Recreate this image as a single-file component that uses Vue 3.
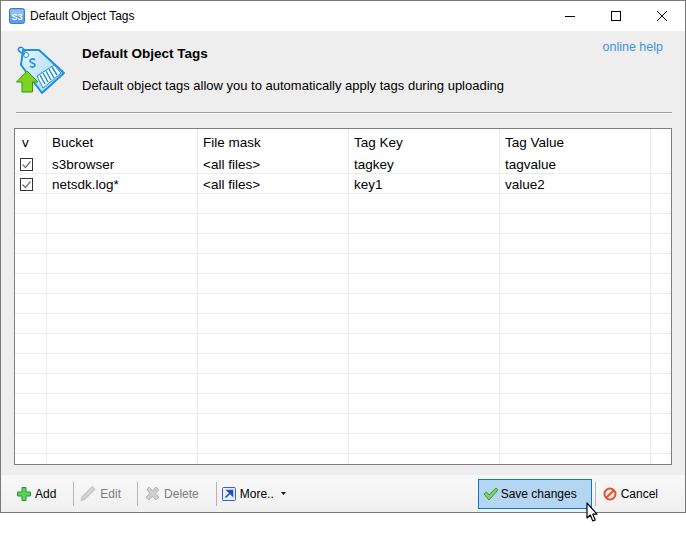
<template>
  <div class="page">
    <div class="window">
      <div class="titlebar">
        <svg class="app-icon" width="16" height="16" viewBox="0 0 16 16">
          <rect x="0.5" y="0.5" width="15" height="15" rx="2" fill="#5b9fe6" stroke="#3c7cc8" />
          <rect x="1.5" y="1.5" width="13" height="6" rx="1" fill="#8fc2f2" />
          <text x="8" y="12" text-anchor="middle" class="app-icon-text">S3</text>
        </svg>
        <span class="title-text">Default Object Tags</span>
        <div class="win-buttons">
          <svg width="46" height="30" viewBox="0 0 46 30"><path d="M18 15.500h10" stroke="#000" fill="none" /></svg>
          <svg width="46" height="30" viewBox="0 0 46 30"><rect x="18.500" y="10.500" width="9" height="9" stroke="#000" fill="none" /></svg>
          <svg width="46" height="30" viewBox="0 0 46 30"><path d="M18 10l10 10M28 10l-10 10" stroke="#000" fill="none" /></svg>
        </div>
      </div>

      <div class="body">
        <div class="header">
          <svg class="tag-icon" width="50" height="50" viewBox="0 0 50 50">
            <defs>
              <linearGradient id="tagFill" x1="0" y1="0" x2="1" y2="1">
                <stop offset="0" stop-color="#e4f4fe" />
                <stop offset="1" stop-color="#9fd6f8" />
              </linearGradient>
            </defs>
            <path d="M7 5 L23 5 L48 28 L26 48 L5 20 Z" fill="url(#tagFill)" stroke="#1c8fe0" stroke-width="2" stroke-linejoin="round" />
            <circle cx="10" cy="10" r="2.500" fill="#fff" stroke="#1c8fe0" />
            <path d="M9 9C4 8 1 5 3 3 5 1 8 3 9 7" fill="none" stroke="#1c8fe0" stroke-width="1.500" />
            <path d="M19 15c-2-2-5-1-5 1s5 2 5 4-3 3-5 1" fill="none" stroke="#1c8fe0" stroke-width="1.600" />
            <path d="M21 31 L38 20 L45 28 L27 43 Z" fill="#fff" stroke="#1c8fe0" />
            <path d="M24 30l5 9M27 28l5 9M30 26l5 9M33 24l5 9M36 22l5 8" stroke="#1c8fe0" stroke-width="1.500" fill="none" />
            <path d="M11 26 L22 37 L16.500 37 L16.500 47 L6 47 L6 37 L0.500 37 Z" fill="#7ed321" stroke="#2f9a12" stroke-linejoin="round" />
          </svg>
          <div class="header-text">
            <div class="header-title">Default Object Tags</div>
            <div class="header-desc">Default object tags allow you to automatically apply tags during uploading</div>
          </div>
          <a class="help-link">online help</a>
        </div>
        <div class="separator"></div>

        <div class="grid">
          <div class="grid-head">
            <div v-for="col in columns" :key="col" class="head-cell">{{ col }}</div>
            <div class="head-cell filler"></div>
          </div>
          <div v-for="(row, i) in rows" :key="i" class="grid-row">
            <div class="cell check-cell">
              <svg v-if="row.bucket" width="13" height="13" viewBox="0 0 13 13">
                <rect x="0.500" y="0.500" width="12" height="12" fill="#fff" stroke="#333" />
                <path d="M2.500 6.500l3 3 5-6" fill="none" stroke="#777" stroke-width="1.300" />
              </svg>
            </div>
            <div class="cell">{{ row.bucket }}</div>
            <div class="cell">{{ row.mask }}</div>
            <div class="cell">{{ row.key }}</div>
            <div class="cell">{{ row.value }}</div>
            <div class="cell filler"></div>
          </div>
        </div>
      </div>

      <div class="toolbar">
        <div class="tool">
          <svg width="14" height="14" viewBox="0 0 14 14"><path d="M5 .5h4v4.500h4.500v4H9v4.500H5V9H.5V5H5z" fill="#5fcf5f" stroke="#1f9a3a" /></svg>
          <span>Add</span>
        </div>
        <i class="tool-sep"></i>
        <div class="tool disabled edit">
          <svg width="16" height="17" viewBox="0 0 17 17"><path d="M13 1l3 3L5.500 14.500l-4.500 1.500 1.500-4.500z" fill="#d2d2d2" stroke="#bbb" /></svg>
          <span>Edit</span>
        </div>
        <i class="tool-sep"></i>
        <div class="tool disabled delete">
          <svg width="15" height="15" viewBox="0 0 15 15"><path d="M2 4l2-3 3.500 4L11 1l3 3-4 3.500 4 3.500-3 3-3.500-4L4 14l-3-3 4-3.500z" fill="#cfcfcf" stroke="#b5b5b5" /></svg>
          <span>Delete</span>
        </div>
        <i class="tool-sep"></i>
        <div class="tool more">
          <svg width="14" height="14" viewBox="0 0 14 14">
            <rect x="0.500" y="0.500" width="13" height="13" rx="1" fill="#e8edfb" stroke="#3a5fc8" />
            <path d="M3.500 10.500L8 6M5.500 3.500h5v5z" stroke="#1f4fc0" stroke-width="1.600" fill="#1f4fc0" />
          </svg>
          <span>More..</span>
          <svg class="caret" width="5" height="3" viewBox="0 0 5 3"><path d="M0 0h5L2.500 3z" fill="#111" /></svg>
        </div>
        <div class="spacer"></div>
        <div class="save-btn">
          <svg width="16" height="14" viewBox="0 0 16 14"><path d="M1 7l2.500-2L6 8l7-7 2 2-9 10z" fill="#7fd06a" stroke="#3a9a3a" /></svg>
          <span>Save changes</span>
        </div>
        <i class="tool-sep end-sep"></i>
        <div class="tool cancel">
          <svg width="14" height="14" viewBox="0 0 14 14">
            <circle cx="7" cy="7" r="5.500" fill="#fbeee8" stroke="#e0512c" stroke-width="2" />
            <path d="M3.500 10.500l7-7" stroke="#e0512c" stroke-width="2" />
          </svg>
          <span>Cancel</span>
        </div>
      </div>
    </div>

    <!-- mouse pointer lies over the save button and past the window edge -->
    <svg class="cursor" width="12" height="20" viewBox="0 0 12 20">
      <path d="M1 1V16L4.300 13L6.800 19L9.300 18L6.800 12.200H11Z" fill="#fff" stroke="#000" stroke-width="1.200" stroke-linejoin="round" />
    </svg>
  </div>
</template>

<script setup>
const columns = ['v', 'Bucket', 'File mask', 'Tag Key', 'Tag Value']

const rows = [
  { bucket: 's3browser', mask: '<all files>', key: 'tagkey', value: 'tagvalue' },
  { bucket: 'netsdk.log*', mask: '<all files>', key: 'key1', value: 'value2' },
]
// the rest of the grid is empty lines
for (let i = 0; i < 14; i++) rows.push({ bucket: '', mask: '', key: '', value: '' })
</script>

<style>
html, body {
  background: #fff;
}
</style>

<style scoped>
.page {
  width: 686px;
  height: 534px;
  position: relative;
  overflow: hidden;
}

.window {
  width: 686px;
  height: 513px;
  box-sizing: border-box;
  border: 1px solid #7a7a7a;
  background: #eee;
  display: flex;
  flex-direction: column;
  font-family: "Liberation Sans", Arial, sans-serif;
  font-size: 13px;
  color: #000;
}

.titlebar {
  height: 30px;
  background: #fff;
  display: flex;
  align-items: center;
  padding-left: 8px;
  flex: none;
  font-size: 12px;
}

.app-icon-text {
  font-size: 9px;
  font-weight: 700;
  fill: #fff;
}

.title-text {
  margin-left: 5px;
}

.win-buttons {
  margin-left: auto;
  display: flex;
}

.body {
  flex: 1;
  padding: 0 13px;
  min-height: 0;
  display: flex;
  flex-direction: column;
}

.header {
  height: 75px;
  display: flex;
  flex: none;
  padding-left: 3px;
  position: relative;
}

.tag-icon {
  margin-top: 14px;
  margin-left: -1px;
}

.header-text {
  margin-left: 16px;
  padding-top: 14px;
}

.header-title {
  font-size: 13.5px;
  font-weight: 700;
  line-height: 18px;
}

.header-desc {
  margin-top: 14px;
  line-height: 18px;
}

.help-link {
  position: absolute;
  right: 9px;
  top: 9px;
  font-size: 12.5px;
  color: #3f92dc;
}

.separator {
  height: 1px;
  background: #a0a0a0;
  border-bottom: 1px solid #fff;
  margin: 6px 0 0 2px;
  flex: none;
}

.grid {
  margin-top: 14px;
  height: 337px;
  box-sizing: border-box;
  border: 1px solid #7f7f7f;
  background: #fff;
  overflow: hidden;
  flex: none;
  font-size: 13.5px;
}

.grid-head,
.grid-row {
  display: grid;
  grid-template-columns: 32px 151px 151px 151px 151px 1fr;
}

.grid-head {
  height: 25px;
}

.head-cell {
  padding-left: 5px;
  line-height: 27px;
  border-right: 1px solid #ececec;
}

.head-cell:first-child {
  padding-left: 7px;
}

.grid-row {
  height: 20px;
  box-sizing: border-box;
  border-bottom: 1px solid #ececec;
}

.cell {
  padding-left: 5px;
  line-height: 21px;
  border-right: 1px solid #ececec;
  white-space: nowrap;
}

.filler {
  border-right: none;
}

.check-cell {
  display: flex;
  align-items: center;
}

.toolbar {
  height: 37px;
  flex: none;
  margin-top: auto;
  display: flex;
  align-items: center;
  padding: 0 27px 0 16px;
  background: linear-gradient(#f8f8f8, #f0f0f0);
  font-size: 12px;
}

.tool {
  display: flex;
  align-items: center;
  gap: 4px;
}

.disabled {
  color: #7d7d7d;
}

.edit {
  margin-right: -1px;
}

.delete {
  margin-left: 1px;
}

.more {
  margin-left: -1px;
}

.tool-sep {
  width: 1px;
  height: 24px;
  background: #b4b4b4;
  margin: 0 6px 0 17px;
}

.caret {
  margin-left: 3px;
}

.spacer {
  flex: 1;
}

.save-btn {
  width: 114px;
  height: 30px;
  box-sizing: border-box;
  border: 1px solid #0a78d7;
  background: #b5d6f2;
  display: flex;
  align-items: center;
  gap: 2px;
  padding-left: 4px;
}

.end-sep {
  margin: 0 7px 0 3px;
}

.cursor {
  position: absolute;
  left: 586px;
  top: 502px;
}
</style>
